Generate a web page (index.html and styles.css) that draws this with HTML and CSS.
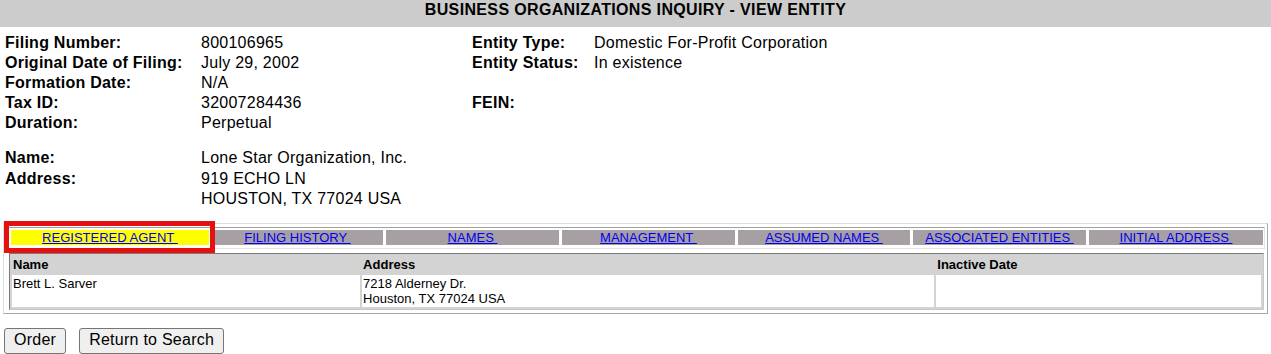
FILE: index.html
```html
<!DOCTYPE html>
<html lang="en">
<head>
    <meta charset="UTF-8">
    <title>Business Organizations Inquiry - View Entity</title>
    <link rel="stylesheet" href="styles.css">
</head>
<body>
    <div class="page-title">BUSINESS ORGANIZATIONS INQUIRY - VIEW ENTITY</div>

    <div class="entity-info">
        <span class="label">Filing Number:</span>
        <span>800106965</span>
        <span class="label">Entity Type:</span>
        <span>Domestic For-Profit Corporation</span>

        <span class="label">Original Date of Filing:</span>
        <span>July 29, 2002</span>
        <span class="label">Entity Status:</span>
        <span>In existence</span>

        <span class="label">Formation Date:</span>
        <span>N/A</span>
        <span></span>
        <span></span>

        <span class="label">Tax ID:</span>
        <span>32007284436</span>
        <span class="label">FEIN:</span>
        <span></span>

        <span class="label">Duration:</span>
        <span>Perpetual</span>
        <span></span>
        <span></span>
    </div>

    <div class="entity-name">
        <span class="label">Name:</span>
        <span>Lone Star Organization, Inc.</span>
        <span class="label">Address:</span>
        <span>919 ECHO LN<br>HOUSTON, TX 77024 USA</span>
    </div>

    <div class="tab-panel">
        <div class="tab-strip">
            <div class="tab selected"><a href="#">REGISTERED AGENT&nbsp;</a></div>
            <div class="tab"><a href="#">FILING HISTORY&nbsp;</a></div>
            <div class="tab"><a href="#">NAMES&nbsp;</a></div>
            <div class="tab"><a href="#">MANAGEMENT&nbsp;</a></div>
            <div class="tab"><a href="#">ASSUMED NAMES&nbsp;</a></div>
            <div class="tab"><a href="#">ASSOCIATED ENTITIES&nbsp;</a></div>
            <div class="tab"><a href="#">INITIAL ADDRESS&nbsp;</a></div>
        </div>

        <table class="agent-table">
            <tr>
                <th class="col-name">Name</th>
                <th class="col-address">Address</th>
                <th>Inactive Date</th>
            </tr>
            <tr>
                <td>Brett L. Sarver</td>
                <td>7218 Alderney Dr.<br>Houston, TX 77024 USA</td>
                <td></td>
            </tr>
        </table>
    </div>

    <div class="actions">
        <button type="button">Order</button>
        <button type="button">Return to Search</button>
    </div>
</body>
</html>
```

FILE: styles.css
```css
body {
    margin: 0;
    font-family: Arial, "Liberation Sans", sans-serif;
    font-size: 16px;
    letter-spacing: 0.25px;
    color: #000;
}

.page-title {
    background-color: #cccccc;
    font-weight: bold;
    text-align: center;
    letter-spacing: 0.35px;
    line-height: 18px;
    padding: 1px 0 8px;
}

.label {
    font-weight: bold;
}

.entity-info {
    display: grid;
    grid-template-columns: 196px 271px 122px 1fr;
    grid-auto-rows: 20px;
    line-height: 20px;
    padding: 6px 0 0 5px;
}

.entity-name {
    display: grid;
    grid-template-columns: 196px 1fr;
    row-gap: 1px;
    line-height: 20px;
    margin-top: 15px;
    padding-left: 5px;
}

.tab-panel {
    margin: 14px 3px 0;
    padding: 3px 2px 3px;
    border: 1px solid;
    border-color: #dedede #a8a8a8 #a8a8a8 #dedede;
    letter-spacing: normal;
}

.tab-strip {
    display: grid;
    grid-template-columns: 198fr 171fr 173fr 173fr 172fr 173fr 174fr;
    column-gap: 3px;
    padding: 2px 1px 3px 4px;
    border: 1px solid;
    border-color: #a0a0a0 #e3e3e3 #e3e3e3 #a0a0a0;
}

.tab {
    background-color: #a69fa4;
    text-align: center;
    font-size: 13px;
    line-height: 15px;
}

.tab a {
    color: #0000ee;
}

.tab.selected {
    position: relative;
    background-color: #ffff00;
    z-index: 1;
}

/* red highlight box around the current tab */
.tab.selected::after {
    content: "";
    position: absolute;
    top: -9px;
    left: -7px;
    right: -6px;
    bottom: -8px;
    border: 5px solid #e51010;
}

.agent-table {
    width: calc(100% - 4px);
    margin: 4px 0 0 3px;
    table-layout: fixed;
    border-collapse: separate;
    border-spacing: 2px;
    border: 1px solid;
    border-color: #7a7a7a #c8c8c8 #c8c8c8 #7a7a7a;
    background-color: #d3d3d3;
    font-size: 13px;
    line-height: 15px;
}

.agent-table th {
    text-align: left;
    padding: 1px;
}

.agent-table td {
    background-color: #fff;
    vertical-align: top;
    padding: 1px;
    height: 30px;
}

.col-name {
    width: 27.8%;
}

.col-address {
    width: 45.8%;
}

.actions {
    display: flex;
    gap: 13px;
    margin: 14px 0 0 4px;
}

.actions button {
    font-family: Arial, "Liberation Sans", sans-serif;
    font-size: 16px;
    letter-spacing: 0.25px;
    line-height: 18px;
    color: #000;
    background-color: #efefef;
    border: 1px solid #767676;
    border-radius: 3px;
    padding: 2px 9px 4px;
}
```
